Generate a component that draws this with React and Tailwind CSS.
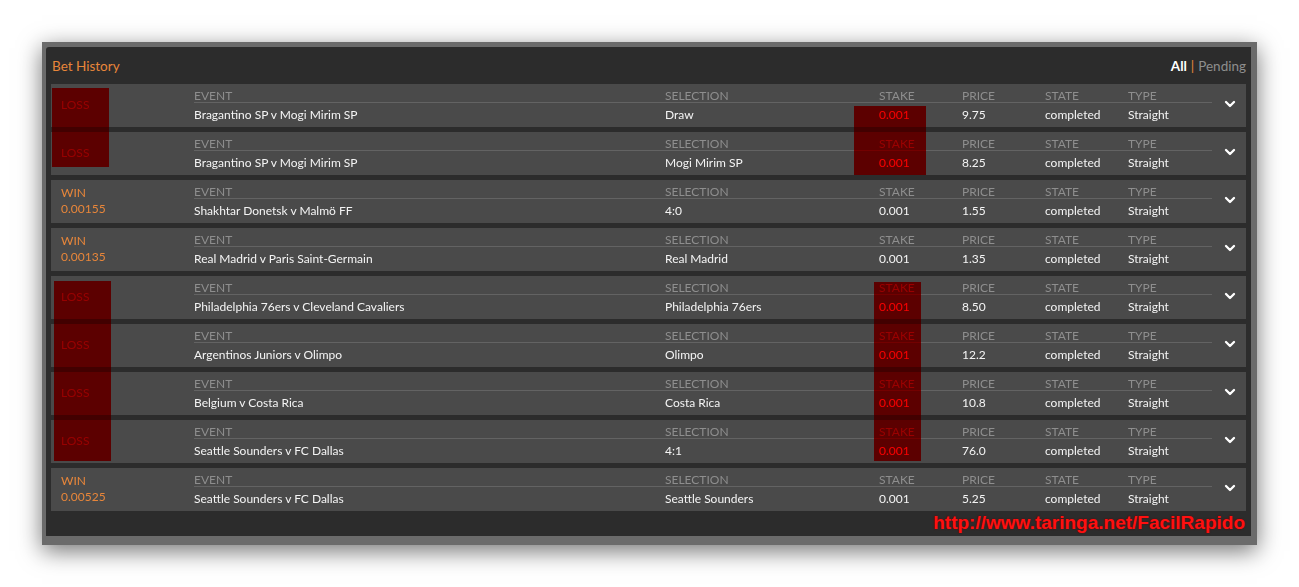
import React from 'react';
import { ChevronDown } from 'lucide-react';

const bets = [
  { result: 'LOSS', event: 'Bragantino SP v Mogi Mirim SP', selection: 'Draw', stake: '0.001', price: '9.75' },
  { result: 'LOSS', event: 'Bragantino SP v Mogi Mirim SP', selection: 'Mogi Mirim SP', stake: '0.001', price: '8.25' },
  { result: 'WIN', amount: '0.00155', event: 'Shakhtar Donetsk v Malmö FF', selection: '4:0', stake: '0.001', price: '1.55' },
  { result: 'WIN', amount: '0.00135', event: 'Real Madrid v Paris Saint-Germain', selection: 'Real Madrid', stake: '0.001', price: '1.35' },
  { result: 'LOSS', event: 'Philadelphia 76ers v Cleveland Cavaliers', selection: 'Philadelphia 76ers', stake: '0.001', price: '8.50' },
  { result: 'LOSS', event: 'Argentinos Juniors v Olimpo', selection: 'Olimpo', stake: '0.001', price: '12.2' },
  { result: 'LOSS', event: 'Belgium v Costa Rica', selection: 'Costa Rica', stake: '0.001', price: '10.8' },
  { result: 'LOSS', event: 'Seattle Sounders v FC Dallas', selection: '4:1', stake: '0.001', price: '76.0' },
  { result: 'WIN', amount: '0.00525', event: 'Seattle Sounders v FC Dallas', selection: 'Seattle Sounders', stake: '0.001', price: '5.25' },
];

const Cell = ({ label, value, width }) => (
  <div className={`${width} shrink-0`}>
    <div className="h-[19px] pt-[5px] text-[12px] leading-[13px] uppercase text-[#8e8e8e] border-b border-[#636363]">{label}</div>
    <div className="pt-[5px] text-[12px] leading-[14px] text-[#f4f4f4]">{value}</div>
  </div>
);

const BetRow = ({ bet }) => (
  <div className="flex h-[43px] bg-[#4a4a4a]">
    <div className="w-[143px] shrink-0 pl-[10px] text-[12px] leading-[16px]">
      {bet.result === 'WIN' ? (
        <div className="pt-[5px] text-[#e8863a]">
          <div>WIN</div>
          <div>{bet.amount}</div>
        </div>
      ) : (
        <div className="pt-[13px] text-[#8c8c8c]">LOSS</div>
      )}
    </div>
    <Cell label="Event" value={bet.event} width="w-[471px]" />
    <Cell label="Selection" value={bet.selection} width="w-[214px]" />
    <Cell label="Stake" value={bet.stake} width="w-[83px]" />
    <Cell label="Price" value={bet.price} width="w-[83px]" />
    <Cell label="State" value="completed" width="w-[83px]" />
    <Cell label="Type" value="Straight" width="w-[84px]" />
    <div className="flex-1 flex justify-center pt-[12px] pl-[2px]">
      <ChevronDown size={16} strokeWidth={3.5} className="text-white" />
    </div>
  </div>
);

// red marker painted over a loss: multiply layer plus a faint red wash
const Mark = ({ box }) => (
  <>
    <div className={`absolute ${box} bg-[#ff0000] mix-blend-multiply`} />
    <div className={`absolute ${box} bg-[#ff0000]/10`} />
  </>
);

export default function App() {
  return (
    <div className="h-[587px] bg-white pt-[42px] pl-[42px]" style={{ fontFamily: 'Lato, "Open Sans", sans-serif' }}>
      <div className="w-[1215px] bg-[#6b6b6b] pt-[5px] pl-[4px] pr-[6px] pb-[9px] shadow-[0_6px_22px_rgba(0,0,0,0.55)]">
        <div className="bg-[#2c2c2c] rounded-tl-[3px] h-[489px] flex flex-col">
          <div className="h-[37px] flex items-center justify-between pl-[6px] pr-[5px] pt-[1px]">
            <span className="text-[13.5px] text-[#e8863a]">Bet History</span>
            <span className="text-[13.5px]">
              <span className="text-white font-bold">All</span>
              <span className="text-[#e8863a] mx-[4px]">|</span>
              <span className="text-[#8e8e8e]">Pending</span>
            </span>
          </div>
          <div className="relative isolate ml-[5px] w-[1195px] flex flex-col gap-[5px] bg-[#2c2c2c]">
            {bets.map((bet, i) => (
              <BetRow key={i} bet={bet} />
            ))}
            <Mark box="left-[1px] top-[4px] w-[57px] h-[79px]" />
            <Mark box="left-[3px] top-[197px] w-[57px] h-[180px]" />
            <Mark box="left-[803px] top-[22px] w-[72px] h-[69px]" />
            <Mark box="left-[823px] top-[198px] w-[47px] h-[179px]" />
          </div>
          <div className="flex-1 flex justify-end items-start pr-[6px] pt-[1px]">
            <span
              className="text-[19px] leading-[22px] font-bold text-[#ff1010] [text-shadow:0_0_2px_#600000]"
              style={{ fontFamily: '"Liberation Sans", Arial, sans-serif' }}
            >
              http://www.taringa.net/FacilRapido
            </span>
          </div>
        </div>
      </div>
    </div>
  );
}
